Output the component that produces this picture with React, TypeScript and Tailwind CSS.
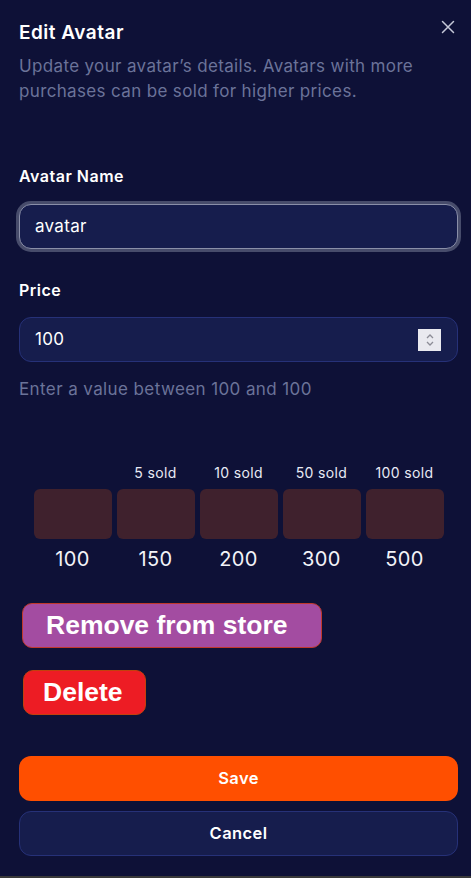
import React from "react";

const tiers = [
  { label: "", price: "100" },
  { label: "5 sold", price: "150" },
  { label: "10 sold", price: "200" },
  { label: "50 sold", price: "300" },
  { label: "100 sold", price: "500" },
];

export default function App() {
  return (
    <div
      className="w-[471px] h-[878px] bg-[#0e1137] text-white relative overflow-hidden border-b-2 border-[#3a3a3a]"
      style={{ fontFamily: "Inter, 'Noto Sans', sans-serif" }}
    >
      <button className="absolute right-[16px] top-[20px] text-[#c5c8d8]">
        <svg width="14" height="14" viewBox="0 0 14 14" fill="none" stroke="currentColor" strokeWidth="1.5" strokeLinecap="round">
          <path d="M1.5 1.5 L12.5 12.5 M12.5 1.5 L1.5 12.5" />
        </svg>
      </button>
      <div className="pl-[19px] pr-[13px] pt-[20px]">
        <h2 className="text-[19px] font-semibold leading-[26px] tracking-[0.5px]">Edit Avatar</h2>
        <p className="mt-[8px] text-[17px] leading-[25px] text-[#6b7399] tracking-[0.35px]">
          Update your avatar’s details. Avatars with more purchases can be sold for higher prices.
        </p>

        <div className="mt-[60px]">
          <label className="block text-[16px] font-semibold leading-[24px] tracking-[0.5px]">Avatar Name</label>
          <div className="mt-[16px] rounded-[12px] ring-[3px] ring-[#474c6b] border border-[#8a8fa8] bg-[#161d4d] h-[45px] flex items-center px-[15px] text-[17px] tracking-[0.3px]">
            avatar
          </div>
        </div>

        <div className="mt-[29px]">
          <label className="block text-[16px] font-semibold leading-[24px] tracking-[0.5px]">Price</label>
          <div className="mt-[15px] rounded-[12px] border border-[#263178] bg-[#161d4d] h-[45px] flex items-center justify-between pl-[15px] pr-[16px] text-[17px] tracking-[0.3px]">
            <span>100</span>
            <span className="w-[23px] h-[22px] bg-[#e9e9ef] flex items-center justify-center">
              <svg width="10" height="16" viewBox="0 0 10 16" fill="none" stroke="#8c8c96" strokeWidth="1.3">
                <path d="M2 6 L5 3 L8 6" />
                <path d="M2 10 L5 13 L8 10" />
              </svg>
            </span>
          </div>
          <p className="mt-[15px] text-[17px] leading-[24px] text-[#6b7399] tracking-[0.4px]">Enter a value between 100 and 100</p>
        </div>

        <div className="mt-[60px] flex justify-center gap-[5px]">
          {tiers.map((t, i) => (
            <div key={i} className="w-[78px] flex flex-col items-center">
              <div className="h-[24px] text-[14px] leading-[24px] text-[#e8eaf4] tracking-[0.35px]">{t.label}</div>
              <div className="mt-[4px] w-[78px] h-[50px] rounded-[6px] bg-[#3f212d]" />
              <div className="mt-[6px] text-[20px] leading-[28px] text-[#f2f3f8] tracking-[0.4px]">{t.price}</div>
            </div>
          ))}
        </div>

        <div className="mt-[30px] flex flex-col items-start gap-[22px] pl-[3px]" style={{ fontFamily: "'Liberation Sans', Arial, sans-serif" }}>
          <button className="h-[45px] w-[300px] rounded-[10px] bg-[#a34ca1] border border-[#c0392b] text-[26.5px] font-bold text-left pl-[23px]">
            Remove from store
          </button>
          <button className="h-[45px] w-[123px] ml-[1px] rounded-[10px] bg-[#ed1c24] border border-[#c2410c] text-[26.5px] font-bold text-left pl-[19px]">
            Delete
          </button>
        </div>

        <div className="mt-[41px] flex flex-col gap-[10px]">
          <button className="h-[45px] w-full rounded-[12px] bg-[#ff4f00] text-[16.5px] font-semibold tracking-[0.4px]">Save</button>
          <button className="h-[45px] w-full rounded-[12px] bg-[#161d4d] border border-[#263178] text-[16.5px] font-semibold tracking-[0.4px]">Cancel</button>
        </div>
      </div>
    </div>
  );
}
